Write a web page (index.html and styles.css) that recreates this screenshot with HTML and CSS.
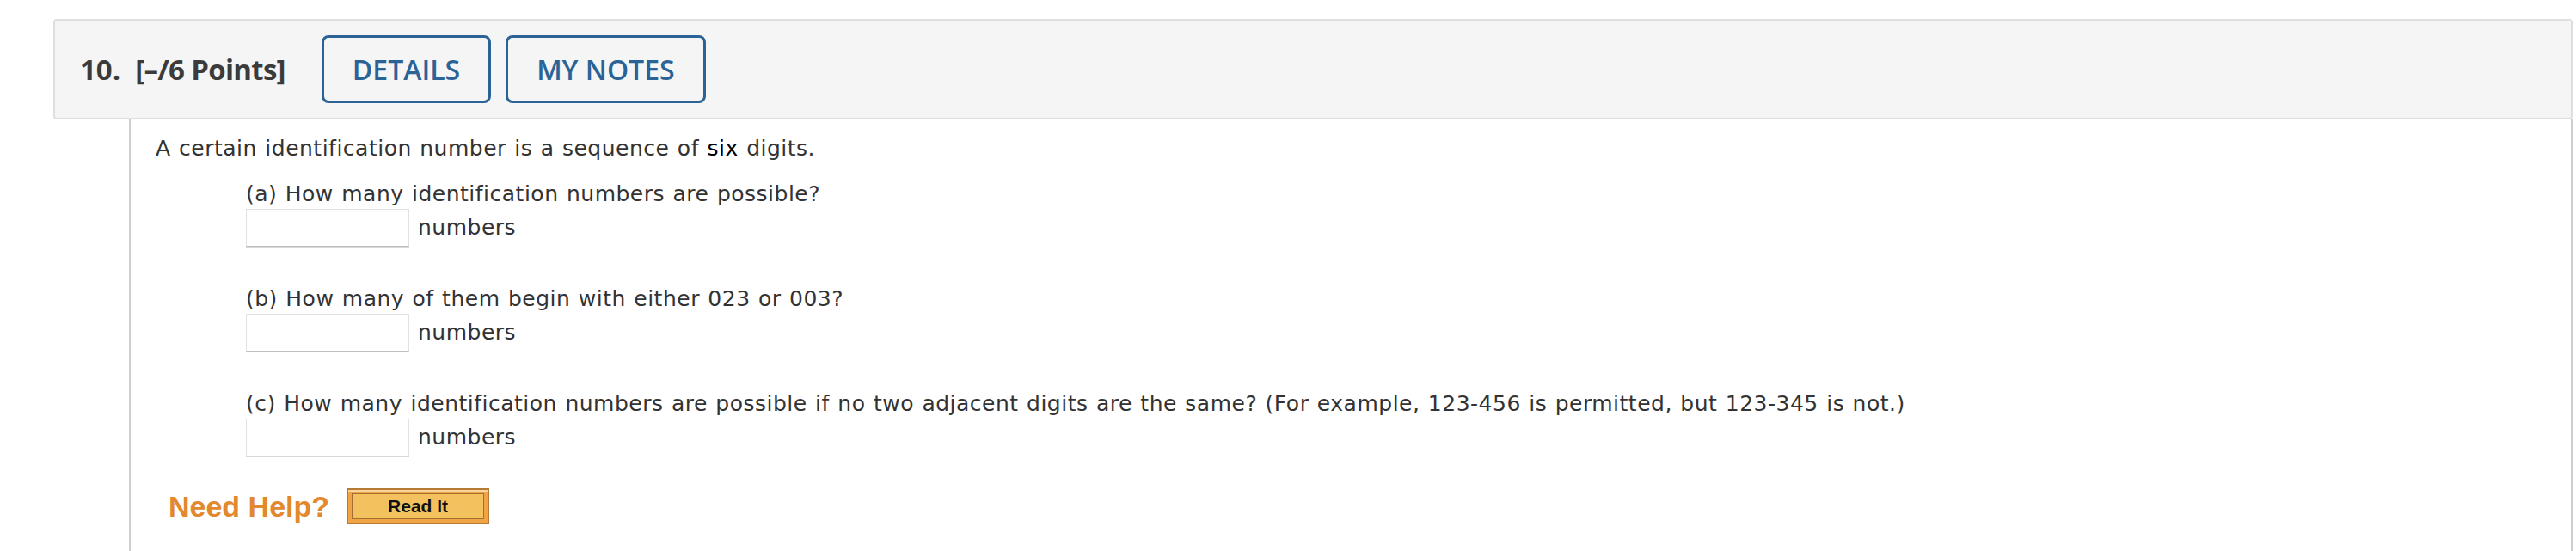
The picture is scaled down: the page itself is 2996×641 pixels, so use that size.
FILE: index.html
```html
<!DOCTYPE html>
<html lang="en">

<head>
    <meta charset="UTF-8">
    <meta name="viewport" content="width=device-width, initial-scale=1.0">
    <title>Question 10</title>
    <link rel="stylesheet" href="styles.css">
</head>

<body>

    <div class="page">
        <!-- Question header -->
        <div class="q-head">
            <span class="q-num">10.</span>
            <span class="q-points">[&ndash;/6 Points]</span>
            <button class="q-btn" type="button">DETAILS</button>
            <button class="q-btn" type="button">MY NOTES</button>
        </div>

        <!-- Question body -->
        <div class="q-body">
            <p class="intro">A certain identification number is a sequence of <span class="hl">six</span> digits.</p>

            <div class="part">
                <p class="part-q">(a) How many identification numbers are possible?</p>
                <div class="answer">
                    <input type="text" aria-label="answer a">
                    <span>numbers</span>
                </div>
            </div>

            <div class="part">
                <p class="part-q">(b) How many of them begin with either 023 or 003?</p>
                <div class="answer">
                    <input type="text" aria-label="answer b">
                    <span>numbers</span>
                </div>
            </div>

            <div class="part">
                <p class="part-q">(c) How many identification numbers are possible if no two adjacent digits are the same? (For example, 123-456 is permitted, but 123-345 is not.)</p>
                <div class="answer">
                    <input type="text" aria-label="answer c">
                    <span>numbers</span>
                </div>
            </div>

            <div class="help">
                <span class="need-help">Need Help?</span>
                <span class="read-it"><span class="read-it-inner">Read It</span></span>
            </div>
        </div>
    </div>

</body>

</html>
```

FILE: styles.css
```css
/* Reset */
* {
    margin: 0;
    padding: 0;
    box-sizing: border-box;
}

html,
body {
    height: 100%;
    overflow: hidden;
}

body {
    background-color: #fff;
    color: #333;
    font-family: 'DejaVu Sans', Verdana, sans-serif;
}

.page {
    display: flex;
    flex-direction: column;
    height: 100vh;
    padding: 22px 4px 0 62px;
}

/* Header bar */
.q-head {
    display: flex;
    align-items: center;
    padding: 17px 28px 17px 29px;
    background-color: #f5f5f5;
    border: 2px solid #dedede;
    border-radius: 4px;
    font-family: 'Open Sans', sans-serif;
}

.q-num,
.q-points {
    font-size: 33px;
    font-weight: 700;
    color: #3b3b3b;
}

.q-num {
    margin-right: 17px;
}

.q-points {
    margin-right: 42px;
    letter-spacing: -0.7px;
}

.q-btn {
    height: 79px;
    padding: 0 33px;
    margin-right: 17px;
    background-color: transparent;
    border: 3px solid #2c6396;
    border-radius: 8px;
    color: #2c6396;
    font-family: 'Open Sans', sans-serif;
    font-size: 32px;
    font-weight: 600;
}

/* Body */
.q-body {
    flex: 1;
    margin-left: 88px;
    padding: 15px 0 0 29px;
    border-left: 2px solid #cdcdcd;
    border-right: 2px solid #cdcdcd;
    font-size: 25px;
    letter-spacing: 0.5px;
    word-spacing: 1px;
}

.intro {
    line-height: 38px;
}

.hl {
    color: #000;
}

.part {
    margin-left: 105px;
    margin-top: 17px;
}

.part + .part {
    margin-top: 44px;
}

.part-q {
    line-height: 34px;
}

.answer {
    display: flex;
    align-items: center;
    line-height: 34px;
}

.answer input {
    width: 190px;
    height: 44px;
    margin-right: 10px;
    border: 1px solid #e2e2e2;
    border-bottom-color: #bdbdbd;
    box-shadow: 0 1px 0 #d8d8d8;
    background-color: #fff;
}

/* Help row */
.help {
    display: flex;
    align-items: center;
    margin-top: 37px;
    margin-left: 15px;
    letter-spacing: 0;
    word-spacing: 0;
}

.need-help {
    margin-right: 20px;
    font-family: 'Liberation Sans', Arial, sans-serif;
    font-size: 34px;
    font-weight: 700;
    color: #e2892f;
}

.read-it {
    display: block;
    width: 166px;
    height: 42px;
    padding: 4px;
    background-color: #f0a443;
    border: 2px solid #b57b36;
    box-shadow: inset 0 2px 0 #f8d49a;
}

.read-it-inner {
    display: flex;
    align-items: center;
    justify-content: center;
    height: 100%;
    background-color: #f3c15d;
    border: 1px solid #a06f31;
    font-family: 'Liberation Sans', Arial, sans-serif;
    font-size: 21px;
    font-weight: 700;
    color: #111;
}
```
